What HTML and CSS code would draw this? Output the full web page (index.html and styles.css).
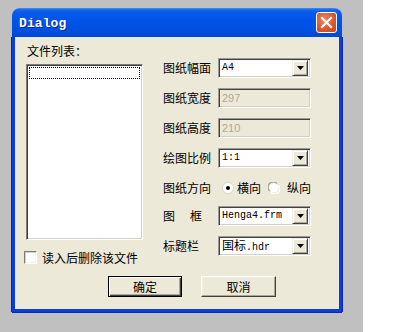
FILE: index.html
```html
<!DOCTYPE html>
<html>
<head>
<meta charset="utf-8">
<link rel="stylesheet" href="styles.css">
</head>
<body>
<div class="desk">
  <div class="window">
    <div class="titlebar">
      <span class="title">Dialog</span>
      <span class="close"><svg width="13" height="13" viewBox="0 0 13 13"><path d="M2 2 L11 11 M11 2 L2 11" stroke="#fff" stroke-width="2.2" stroke-linecap="square"/></svg></span>
    </div>
    <div class="body">
      <div class="cols">
        <div class="left">
          <div class="lbl">文件列表：</div>
          <div class="listbox"><div class="focusrow"></div></div>
          <div class="chkrow"><span class="chk"></span><span class="lbl">读入后删除该文件</span></div>
        </div>
        <div class="right">
          <div class="row"><span class="rl">图纸幅面</span><div class="combo"><span class="val mono">A4</span><span class="drop"><svg width="7" height="4" viewBox="0 0 7 4"><path d="M0 0H7L3.5 4Z" fill="#000"/></svg></span></div></div>
          <div class="row gap10"><span class="rl">图纸宽度</span><div class="edit">297</div></div>
          <div class="row gap10"><span class="rl">图纸高度</span><div class="edit">210</div></div>
          <div class="row gap10"><span class="rl">绘图比例</span><div class="combo"><span class="val mono">1:1</span><span class="drop"><svg width="7" height="4" viewBox="0 0 7 4"><path d="M0 0H7L3.5 4Z" fill="#000"/></svg></span></div></div>
          <div class="row gap10"><span class="rl">图纸方向</span>
            <div class="radios">
              <span class="radio"><svg width="12" height="12" viewBox="0 0 12 12"><circle cx="6" cy="6" r="5.5" fill="#fff" stroke="#d8d6cc"/><circle cx="6" cy="6" r="2" fill="#000"/></svg></span><span class="rtext">横向</span>
              <span class="radio r2"><svg width="12" height="12" viewBox="0 0 12 12"><path d="M1.5 9 A5 5 0 0 1 9 1.5" fill="none" stroke="#9d9b92" stroke-width="1.2"/><circle cx="6" cy="6" r="4.5" fill="#fff"/><path d="M10.5 3 A5 5 0 0 1 3 10.5" fill="none" stroke="#fff" stroke-width="1.2"/></svg></span><span class="rtext">纵向</span>
            </div>
          </div>
          <div class="row gap8"><span class="rl split"><span>图</span><span>框</span></span><div class="combo"><span class="val mono">Henga4.frm</span><span class="drop"><svg width="7" height="4" viewBox="0 0 7 4"><path d="M0 0H7L3.5 4Z" fill="#000"/></svg></span></div></div>
          <div class="row gap10"><span class="rl">标题栏</span><div class="combo"><span class="val"><span class="cjk">国标</span><span class="mono">.hdr</span></span><span class="drop"><svg width="7" height="4" viewBox="0 0 7 4"><path d="M0 0H7L3.5 4Z" fill="#000"/></svg></span></div></div>
        </div>
      </div>
      <div class="buttons">
        <div class="btn default"><span>确定</span></div>
        <div class="btn"><span>取消</span></div>
      </div>
    </div>
  </div>
</div>
</body>
</html>
```
FILE: styles.css
```css
html, body {
  margin: 0;
  padding: 0;
  background: #ffffff;
}
.desk {
  width: 363px;
  height: 332px;
  box-sizing: border-box;
  padding: 8px 0 0 12px;
  background: #c0c0c0;
}
.window {
  width: 330px;
  height: 304px;
  display: flex;
  flex-direction: column;
}
.titlebar {
  height: 29px;
  box-sizing: border-box;
  border-radius: 8px 8px 0 0;
  background: linear-gradient(to bottom, #3b8cf5 0, #1866ee 2px, #0a5ae8 4px, #0055e8 40%, #004fe0 80%, #0046d2 100%);
  display: flex;
  align-items: center;
  justify-content: space-between;
  padding: 0 5px 0 7px;
}
.title {
  font-family: "Liberation Mono", monospace;
  font-weight: bold;
  font-size: 13px;
  color: #fff;
  text-shadow: 1px 1px 0 #0b2a8a;
  letter-spacing: 0.1px;
  margin-top: 1px;
}
.close {
  width: 21px;
  height: 21px;
  box-sizing: border-box;
  border: 1px solid #fff;
  border-radius: 3px;
  background: radial-gradient(circle at 40% 35%, #e9845f 0, #d9552c 60%, #c04520 100%);
  display: flex;
  align-items: center;
  justify-content: center;
}
.body {
  flex: 1;
  background: #ece9d8;
  border: 3px solid #0a3ed8;
  border-top: none;
  box-shadow: -1px 0 0 #0828b8, 1px 0 0 #0828b8, 0 1px 0 #0828b8;
  font-family: "Noto Sans CJK SC", sans-serif;
  font-size: 12px;
  color: #000;
  display: flex;
  flex-direction: column;
}
.cols {
  display: flex;
}
.left {
  width: 117px;
  margin-left: 11px;
  padding-top: 7px;
}
.lbl {
  line-height: 14px;
  height: 14px;
  padding-left: 1px;
}
.listbox {
  margin-top: 6px;
  height: 176px;
  box-sizing: border-box;
  background: #fff;
  border: 1px solid;
  border-color: #7f7d72 #fff #fff #7f7d72;
  box-shadow: inset 1px 1px 0 #404040, inset -1px -1px 0 #d4d0c8;
  padding: 2px;
}
.focusrow {
  height: 12px;
  box-sizing: border-box;
  border: 1px dotted #000;
}
.chkrow {
  margin-top: 11px;
  margin-left: -2px;
  display: flex;
  align-items: center;
  height: 13px;
}
.chk {
  width: 13px;
  height: 13px;
  box-sizing: border-box;
  background: #fff;
  border: 1px solid;
  border-color: #7f7d72 #fff #fff #7f7d72;
  box-shadow: inset 1px 1px 0 #d4d0c8, inset -1px -1px 0 #f4f3ee;
  margin-right: 5px;
}
.chkrow .lbl {
  padding-left: 0;
}
.right {
  margin-left: 20px;
  padding-top: 21px;
}
.row {
  display: flex;
  align-items: center;
  height: 20px;
}
.gap10 { margin-top: 10px; }
.gap8 { margin-top: 8px; }
.rl {
  width: 55px;
  line-height: 14px;
}
.rl.split {
  display: flex;
  gap: 15px;
}
.combo, .edit {
  width: 93px;
  height: 20px;
  box-sizing: border-box;
  border: 1px solid;
  border-color: #9d9b92 #fff #fff #9d9b92;
  box-shadow: inset 1px 1px 0 #404040, inset -1px -1px 0 #d4d0c8;
}
.combo {
  background: #fff;
  display: flex;
  align-items: center;
  padding: 2px;
}
.val {
  flex: 1;
  padding-left: 1px;
  font-family: "Liberation Serif", "Noto Sans CJK SC", serif;
  font-size: 12px;
  line-height: 14px;
}
.mono {
  font-family: "Liberation Mono", monospace;
  font-size: 10px;
}
.cjk {
  font-family: "Noto Sans CJK SC", sans-serif;
  font-size: 12px;
}
.drop {
  width: 16px;
  height: 16px;
  box-sizing: border-box;
  background: #ece9d8;
  border: 1px solid;
  border-color: #f1efe2 #404040 #404040 #f1efe2;
  box-shadow: inset 1px 1px 0 #fff, inset -1px -1px 0 #aca899;
  display: flex;
  align-items: center;
  justify-content: center;
}
.edit {
  background: #ece9d8;
  color: #aca899;
  font-family: "Liberation Sans", sans-serif;
  font-size: 11px;
  line-height: 18px;
  padding-left: 3px;
}
.radios {
  display: flex;
  align-items: center;
  padding-left: 4px;
}
.radio {
  width: 12px;
  height: 12px;
  display: flex;
}
.rtext {
  margin-left: 3px;
  line-height: 14px;
}
.r2 {
  margin-left: 7px;
}
.r2 + .rtext {
  margin-left: 7px;
}
.buttons {
  display: flex;
  gap: 19px;
  margin-top: 12px;
  padding-left: 93px;
}
.btn {
  width: 75px;
  height: 21px;
  box-sizing: border-box;
  background: #ece9d8;
  border: 1px solid;
  border-color: #fff #404040 #404040 #fff;
  box-shadow: inset -1px -1px 0 #aca899, inset 1px 1px 0 #f1efe2;
  display: flex;
  align-items: center;
  justify-content: center;
  line-height: 14px;
}
.btn.default {
  width: 74px;
  border: 1px solid #000;
  box-shadow: inset 1px 1px 0 #fff, inset -1px -1px 0 #404040, inset -2px -2px 0 #aca899;
}
```
